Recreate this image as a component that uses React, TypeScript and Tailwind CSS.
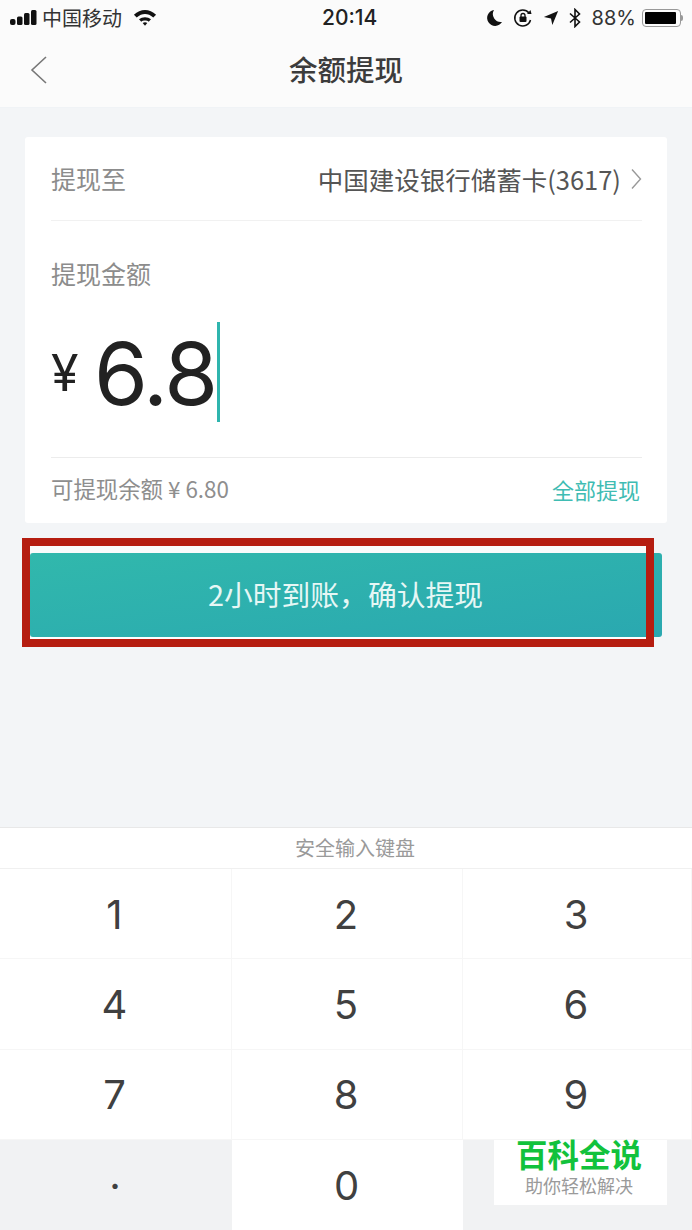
import React from "react";

function Key({ label, muted }: { label: string; muted?: boolean }) {
  return (
    <div className={`flex items-center justify-center pt-[2px] pr-[2px] text-[40px] leading-none text-[#404040] ${muted ? "bg-[#f1f2f3]" : "bg-white border-r border-b border-[#f6f6f6]"}`}>
      <span className="font-['Inter',sans-serif] font-normal">{label}</span>
    </div>
  );
}

export default function App() {
  return (
    <div className="relative w-[692px] h-[1230px] overflow-hidden bg-[#f3f5f7] flex flex-col font-['Noto_Sans_CJK_SC','Noto_Sans',sans-serif]">
      {/* Status + nav */}
      <div className="h-[108px] bg-[#fbfbfb] flex flex-col border-b border-[#f0f3f6]">
        <div className="h-[35px] flex items-center pl-[10px] pr-[9px] text-[#222]">
          <div className="w-[312px] flex items-center">
            <svg width="28" height="15" viewBox="0 0 28 15" className="mr-[4px]">
              <rect x="0" y="9" width="5.5" height="6" rx="2" fill="#111" />
              <rect x="7" y="6.5" width="5.5" height="8.5" rx="1.5" fill="#111" />
              <rect x="14" y="3" width="5.5" height="12" rx="1.5" fill="#111" />
              <rect x="21" y="0" width="5.5" height="15" rx="1.5" fill="#111" />
            </svg>
            <span className="text-[20px] leading-none text-[#333]">中国移动</span>
            <svg width="24" height="17" viewBox="0 0 26 18" className="ml-[11px]">
              <path d="M1 6 C8 -1 18 -1 25 6 L22 9 C16 4 10 4 4 9 Z" fill="#111" />
              <path d="M6.5 11 C10 8 16 8 19.5 11 L17 13.5 C15 12 11 12 9 13.5 Z" fill="#111" />
              <path d="M10.5 15 C12 14 14 14 15.5 15 L13 18 Z" fill="#111" />
            </svg>
          </div>
          <span className="font-['Inter',sans-serif] text-[21px] font-medium leading-none text-[#222]">20:14</span>
          <div className="ml-auto flex items-center">
            <svg width="16" height="18" viewBox="0 0 16 18">
              <path d="M7 1 A8 8 0 1 0 15 13 A8 8 0 0 1 7 1 Z" fill="#111" />
            </svg>
            <svg width="20" height="20" viewBox="0 0 20 20" className="ml-[10px]">
              <path d="M17.5 12 A8 8 0 1 1 16 5" fill="none" stroke="#111" strokeWidth="1.5" />
              <path d="M14 6 L18.5 6 L17.5 2 Z" fill="#111" />
              <rect x="6.5" y="8.5" width="7" height="5.5" rx="1" fill="#111" />
              <path d="M8 9 V7.5 A2 2 0 0 1 12 7.5 V9" fill="none" stroke="#111" strokeWidth="1.3" />
            </svg>
            <svg width="16" height="16" viewBox="0 0 18 18" className="ml-[10px]">
              <path d="M17 1 L1 8 L9 9.5 L10.5 17 Z" fill="#111" />
            </svg>
            <svg width="12" height="20" viewBox="0 0 12 20" className="ml-[10px]">
              <path d="M1 5.5 L10.5 14 L6 18.5 V1.5 L10.5 6 L1 14.5" fill="none" stroke="#111" strokeWidth="1.6" />
            </svg>
            <span className="font-['Inter',sans-serif] text-[20px] leading-none text-[#333] ml-[11px]">88%</span>
            <div className="flex items-center ml-[6px]">
              <div className="w-[39px] h-[18px] rounded-[4px] border border-[#999] p-[2px]">
                <div className="h-full w-[31px] bg-black rounded-[1px]" />
              </div>
              <div className="w-[2px] h-[6px] bg-[#999] rounded-r-sm" />
            </div>
          </div>
        </div>
        <div className="flex-1 relative flex items-center justify-center pb-[4px]">
          <svg width="18" height="30" viewBox="0 0 18 30" className="absolute left-[30px] top-[20px]">
            <path d="M16 2 L2 15 L16 28" fill="none" stroke="#777" strokeWidth="1.6" />
          </svg>
          <span className="text-[28.5px] leading-none text-[#3c3c3c] font-medium">余额提现</span>
        </div>
      </div>

      {/* Card */}
      <div className="mt-[29px] mx-[25px] h-[386px] bg-white rounded-[3px] pl-[26px] pr-[25px] flex flex-col">
        <div className="h-[84px] flex items-center justify-between border-b border-[#f1f1f1]">
          <span className="text-[25px] leading-none text-[#8c8c8c]">提现至</span>
          <div className="flex items-center">
            <span className="text-[25.5px] leading-none text-[#555]">中国建设银行储蓄卡(3617)</span>
            <svg width="11" height="22" viewBox="0 0 11 22" className="ml-[10px]">
              <path d="M1 1.5 L9.5 11 L1 20.5" fill="none" stroke="#999" strokeWidth="1.4" />
            </svg>
          </div>
        </div>
        <div className="h-[237px] border-b border-[#ececec] flex flex-col">
          <span className="mt-[40px] text-[25px] leading-none text-[#8c8c8c]">提现金额</span>
          <div className="mt-[36px] flex items-center h-[100px]">
            <span className="font-['Inter',sans-serif] text-[50px] leading-none text-[#222] w-[44px] mt-[1px]">¥</span>
            <span className="font-['Inter',sans-serif] text-[87px] leading-none text-[#222] font-normal tracking-[-2px] mt-[2px] -ml-[1px]">6.8</span>
            <div className="w-[3px] h-[100px] bg-[#2fb5ae] ml-[1px]" />
          </div>
        </div>
        <div className="flex-1 flex items-center justify-between pb-[4px]">
          <span className="text-[22.4px] leading-none text-[#8e8e8e]">可提现余额 ¥ 6.80</span>
          <span className="text-[22px] leading-none text-[#3fbcb3] mr-[2px]">全部提现</span>
        </div>
      </div>

      {/* Button */}
      <button className="mt-[30px] ml-[30px] w-[632px] h-[84px] shrink-0 rounded-[3px] bg-gradient-to-br from-[#31b8ac] to-[#2aa8b0] text-[#e6f7f5] text-[28.8px] leading-none flex items-center justify-center pr-[1px] pb-[2px]">
        2小时到账，确认提现
      </button>

      <div className="flex-1" />

      {/* Keyboard */}
      <div className="h-[403px] bg-white border-t border-[#e8e8e8] flex flex-col">
        <div className="h-[41px] flex items-center justify-center text-[20px] leading-none text-[#9a9a9a] border-b border-[#f0f0f0] pl-[18px]">安全输入键盘</div>
        <div className="flex-1 grid grid-cols-[232px_231px_229px] grid-rows-4">
          {["1", "2", "3", "4", "5", "6", "7", "8", "9"].map((k) => (
            <Key key={k} label={k} />
          ))}
          <Key label="·" muted />
          <div className="bg-white flex items-center justify-center pt-[2px] pr-[2px] text-[40px] leading-none text-[#404040]">
            <span className="font-['Inter',sans-serif]">0</span>
          </div>
          <div className="bg-[#f1f2f3]" />
        </div>
      </div>

      {/* Red annotation */}
      <div className="absolute left-[22px] top-[538px] w-[632px] h-[109px] border-[8px] border-[#b51d10] pointer-events-none">
        <div className="h-[7px] bg-[#f9fbfb]" />
      </div>
      <div className="absolute left-[30px] top-[637px] w-[616px] h-[2px] bg-white" />

      {/* Watermark */}
      <div className="absolute left-[494px] top-[1140px] w-[173px] h-[65px] bg-white flex flex-col items-center pr-[3px]">
        <span className="text-[31.5px] leading-none font-bold text-[#12c23c] -mt-[2px] whitespace-nowrap">百科全说</span>
        <span className="text-[18px] leading-none text-[#9a9a9a] mt-[6px] whitespace-nowrap">助你轻松解决</span>
      </div>
    </div>
  );
}
